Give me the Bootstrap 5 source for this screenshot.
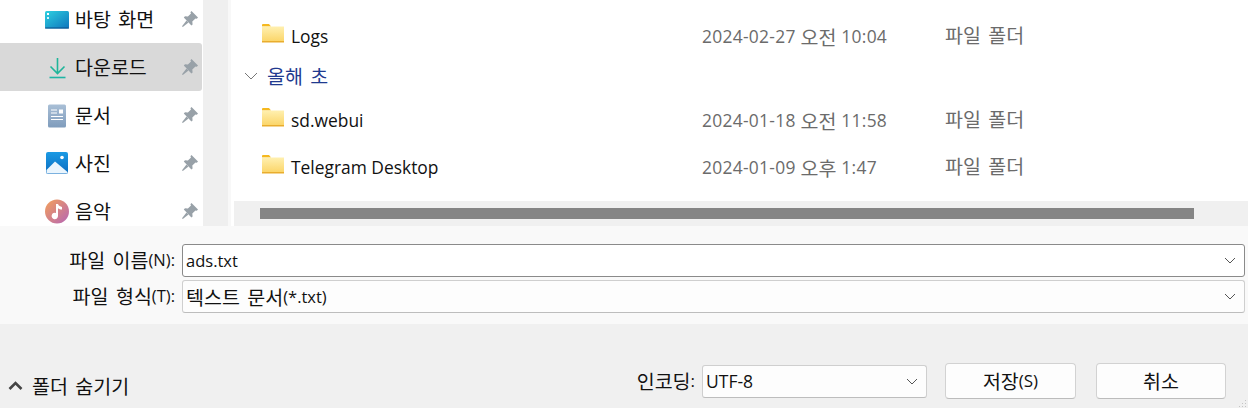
<!DOCTYPE html>
<html lang="ko">
<head>
    <meta charset="UTF-8">
    <meta name="viewport" content="width=device-width, initial-scale=1.0">
    <title>다른 이름으로 저장</title>
    <link href="https://cdn.jsdelivr.net/npm/bootstrap@5.3.0/dist/css/bootstrap.min.css" rel="stylesheet">
    <script src="https://cdn.jsdelivr.net/npm/bootstrap@5.3.0/dist/js/bootstrap.bundle.min.js"></script>
    <style>
        html, body { height: 100%; overflow: hidden; }
        body { background: #f0f0f0; color: #111; font-family: "Open Sans", "Noto Sans CJK KR", sans-serif; font-size: 17px; }
        .ko { font-family: "Noto Sans CJK KR", sans-serif; font-size: 19.5px; word-spacing: 2px; line-height: 1; vertical-align: -2px; letter-spacing: 0; }
        .dlg { width: 1248px; height: 408px; position: relative; }
        .browse { height: 226px; background: #fff; overflow: hidden; }
        .side { width: 203px; height: 226px; overflow: hidden; flex: none; }
        .side .list-group { margin-top: -5px; background: transparent; }
        .side-item { height: 48px; margin-right: 1px; padding: 0 0 0 45px; border: 0; border-radius: 0 3px 3px 0; background: transparent; color: #111; gap: 5px; }
        .side-item.is-active { background: #d9d9d9; }
        .side-icon { width: 25px; height: 25px; flex: none; }
        .pin { width: 16px; height: 16px; margin-left: auto; margin-right: 4px; }
        .gutter { width: 25px; background: #efefef; flex: none; }
        .gutter-edge { width: 3px; background: #f8f8f8; flex: none; }
        .files { width: 1014px; margin-left: 3px; flex: none; }
        .file-list { height: 201px; padding-top: 12px; padding-left: 27px; }
        .file-row { height: 48px; font-size: 17.4px; padding-top: 1px; }
        .file-row + .file-row { margin-top: -1px; }
        .file-name { width: 441px; padding-left: 1px; gap: 6px; flex: none; }
        .file-date { width: 243px; color: #6b6b6b; flex: none; letter-spacing: .3px; white-space: nowrap; }
        .file-kind { color: #6b6b6b; margin-top: -3px; }
        .folder { width: 23px; height: 20px; flex: none; margin-top: -4px; }
        .group-row { height: 32px; margin-left: -17px; margin-bottom: 4px; gap: 9px; color: #1f3a8f; }
        .scroll-track { height: 25px; background: #f0f0f0; padding: 7px 54px 7px 26px; }
        .scroll-thumb { height: 11px; background: #858585; }
        .fields { height: 98px; background: #f9f9f9; padding: 18px 3px 0 0; gap: 3px; }
        .field-label { width: 175px; text-align: right; flex: none; margin-right: 7px; font-size: 16.5px; }
        .fld { height: 33px; border-radius: 3px; border: 1px solid #cfcfcf; border-bottom-color: #bdbdbd; padding: 1px 30px 0 3px; color: #111; font-size: 16.5px; background-color: #fdfdfd; background-image: url("data:image/svg+xml,%3csvg xmlns='http://www.w3.org/2000/svg' viewBox='0 0 12 7'%3e%3cpath fill='none' stroke='%23555' d='M1 1l5 5 5-5'/%3e%3c/svg%3e"); background-size: 12px 7px; background-position: right 8px center; box-shadow: none; }
        .fld.is-focus { border-color: #8a8a8a; background-color: #fff; }
        .foot { height: 84px; padding: 0 22px 9px 8px; }
        .hide-btn { gap: 9px; padding-bottom: 4px; }
        .enc-label { margin-right: 7px; }
        .enc-sel { width: 225px; height: 33px; font-size: 17.5px; }
        .act-btn { width: 131px; height: 36px; margin-left: 18px; background: #fdfdfd; border: 1px solid #d2d2d2; border-bottom-color: #bcbcbc; border-radius: 4px; color: #111; font-size: 17px; padding: 0; }
        .act-btn + .act-btn { width: 130px; margin-left: 20px; }
        .grip { position: absolute; right: 1px; bottom: 1px; width: 8px; height: 8px; }
        .icon-defs { position: absolute; width: 0; height: 0; }
    </style>
</head>
<body>
    <svg class="icon-defs">
        <defs>
            <linearGradient id="folderFill" x1="0" y1="0" x2="0" y2="1"><stop offset="0" stop-color="#fff0b0"/><stop offset="1" stop-color="#fbd568"/></linearGradient>
            <g id="pinIcon"><path d="M9.500 0L16 6.500l-1.200 1.200-1.300-.3-3.200 3.200.3 2.800-1.200 1.200L1.800 6.500 3 5.300l2.900.3 3.100-3.100-.6-1.300z" fill="#98a1a8"/><path d="M4.500 9.500L0 15.200l.8.800 5.700-4.500z" fill="#98a1a8"/></g>
            <g id="folderIcon"><path d="M0 1a1 1 0 0 1 1-1h6l2 2.500H0z" fill="#f5b81f"/><rect x="0" y="2.500" width="22" height="15" fill="url(#folderFill)"/><rect x="0" y="17" width="22" height="1.500" fill="#e9ad2e"/></g>
        </defs>
    </svg>

    <div class="dlg">
        <div class="browse d-flex">
            <div class="side">
                <div class="list-group list-group-flush">
                    <div class="list-group-item side-item d-flex align-items-center">
                        <svg class="side-icon" viewBox="0 0 25 25"><defs><linearGradient id="deskBg" x1="0" y1="0" x2="1" y2="1"><stop offset="0" stop-color="#2dd0e0"/><stop offset="1" stop-color="#0f75bd"/></linearGradient></defs><rect x="0" y="4" width="24" height="17.500" rx="1.500" fill="url(#deskBg)"/><rect x="0" y="20.500" width="24" height="1" fill="#0a4f8a"/><rect x="2" y="6" width="2" height="2" fill="#fff"/><rect x="2" y="10" width="2" height="2" fill="#d5f5fa"/></svg>
                        <span class="ko">바탕 화면</span>
                        <svg class="pin" viewBox="0 0 16 16"><use href="#pinIcon"/></svg>
                    </div>
                    <div class="list-group-item side-item is-active d-flex align-items-center">
                        <svg class="side-icon" viewBox="0 0 25 25"><path d="M12.500 3v15M5.500 11.500l7 7 7-7" fill="none" stroke="#1fb59a" stroke-width="1.600"/><path d="M4.500 22.500h16" stroke="#1fb5a5" stroke-width="1.600"/></svg>
                        <span class="ko">다운로드</span>
                        <svg class="pin" viewBox="0 0 16 16"><use href="#pinIcon"/></svg>
                    </div>
                    <div class="list-group-item side-item d-flex align-items-center">
                        <svg class="side-icon" viewBox="0 0 25 25"><defs><linearGradient id="docBg" x1="0" y1="0" x2="0" y2="1"><stop offset="0" stop-color="#a9bfd6"/><stop offset="1" stop-color="#7f9cbc"/></linearGradient></defs><rect x="3" y="1.500" width="18" height="23" rx="1.500" fill="url(#docBg)"/><path d="M6 7h6M6 10h6M6 13.500h12M6 16.500h12" stroke="#fff" stroke-width="1.200"/><rect x="14" y="6.500" width="4" height="4" fill="#fff"/></svg>
                        <span class="ko">문서</span>
                        <svg class="pin" viewBox="0 0 16 16"><use href="#pinIcon"/></svg>
                    </div>
                    <div class="list-group-item side-item d-flex align-items-center">
                        <svg class="side-icon" viewBox="0 0 25 25"><defs><linearGradient id="picBg" x1="0" y1="0" x2="0" y2="1"><stop offset="0" stop-color="#1b9ae4"/><stop offset="1" stop-color="#0c6cc0"/></linearGradient></defs><rect x="1" y="1" width="22" height="22" rx="2" fill="url(#picBg)"/><circle cx="17" cy="6.500" r="1.800" fill="#fff"/><path d="M1.500 22.500V19L10 10.500 22.500 21v1.500z" fill="#eaf5fd"/></svg>
                        <span class="ko">사진</span>
                        <svg class="pin" viewBox="0 0 16 16"><use href="#pinIcon"/></svg>
                    </div>
                    <div class="list-group-item side-item d-flex align-items-center">
                        <svg class="side-icon" viewBox="0 0 25 25"><defs><linearGradient id="musBg" x1="0" y1="0" x2="1" y2="1"><stop offset="0" stop-color="#f4a15a"/><stop offset="1" stop-color="#b565b5"/></linearGradient></defs><circle cx="12" cy="12.500" r="12" fill="url(#musBg)"/><path d="M11 5h2c.5 2 2.500 2.500 4 3v2.500c-1.500 0-3-.5-4-1.300V17a3.200 3.200 0 1 1-2-3z" fill="#fff"/></svg>
                        <span class="ko">음악</span>
                        <svg class="pin" viewBox="0 0 16 16"><use href="#pinIcon"/></svg>
                    </div>
                </div>
            </div>
            <div class="gutter"></div>
            <div class="gutter-edge"></div>
            <div class="files">
                <div class="file-list">
                    <div class="file-row d-flex align-items-center">
                        <div class="file-name d-flex align-items-center"><svg class="folder" viewBox="0 0 23 20"><use href="#folderIcon"/></svg><span>Logs</span></div>
                        <div class="file-date">2024-02-27 <span class="ko">오전</span> 10:04</div>
                        <div class="file-kind ko">파일 폴더</div>
                    </div>
                    <div class="group-row d-flex align-items-center">
                        <svg width="14" height="8" viewBox="0 0 14 8"><path d="M1 1l6 6 6-6" fill="none" stroke="#777" stroke-width="1"/></svg>
                        <span class="ko">올해 초</span>
                    </div>
                    <div class="file-row d-flex align-items-center">
                        <div class="file-name d-flex align-items-center"><svg class="folder" viewBox="0 0 23 20"><use href="#folderIcon"/></svg><span>sd.webui</span></div>
                        <div class="file-date">2024-01-18 <span class="ko">오전</span> 11:58</div>
                        <div class="file-kind ko">파일 폴더</div>
                    </div>
                    <div class="file-row d-flex align-items-center">
                        <div class="file-name d-flex align-items-center"><svg class="folder" viewBox="0 0 23 20"><use href="#folderIcon"/></svg><span>Telegram Desktop</span></div>
                        <div class="file-date">2024-01-09 <span class="ko">오후</span> 1:47</div>
                        <div class="file-kind ko">파일 폴더</div>
                    </div>
                </div>
                <div class="scroll-track"><div class="scroll-thumb"></div></div>
            </div>
        </div>

        <div class="fields d-flex flex-column">
            <div class="d-flex align-items-center">
                <label class="field-label"><span class="ko">파일 이름</span>(N):</label>
                <div class="form-select fld is-focus d-flex align-items-center"><span>ads.txt</span></div>
            </div>
            <div class="d-flex align-items-center">
                <label class="field-label"><span class="ko">파일 형식</span>(T):</label>
                <div class="form-select fld d-flex align-items-center"><span><span class="ko">텍스트 문서</span>(*.txt)</span></div>
            </div>
        </div>

        <div class="foot d-flex align-items-end">
            <div class="hide-btn d-flex align-items-center">
                <svg width="15" height="9" viewBox="0 0 15 9"><path d="M1.500 8L7.500 2l6 6" fill="none" stroke="#444" stroke-width="2.600"/></svg>
                <span class="ko">폴더 숨기기</span>
            </div>
            <div class="ms-auto d-flex align-items-center">
                <span class="enc-label"><span class="ko">인코딩</span>:</span>
                <div class="form-select fld enc-sel d-flex align-items-center"><span>UTF-8</span></div>
                <button class="btn act-btn" type="button"><span class="ko">저장</span>(S)</button>
                <button class="btn act-btn" type="button"><span class="ko">취소</span></button>
            </div>
        </div>

        <svg class="grip" viewBox="0 0 8 8"><path d="M6 1h1v1H6zM3 4h1v1H3zM6 4h1v1H6zM0 7h1v1H0zM3 7h1v1H3zM6 7h1v1H6z" fill="#c4c4c4"/></svg>
    </div>
</body>
</html>
